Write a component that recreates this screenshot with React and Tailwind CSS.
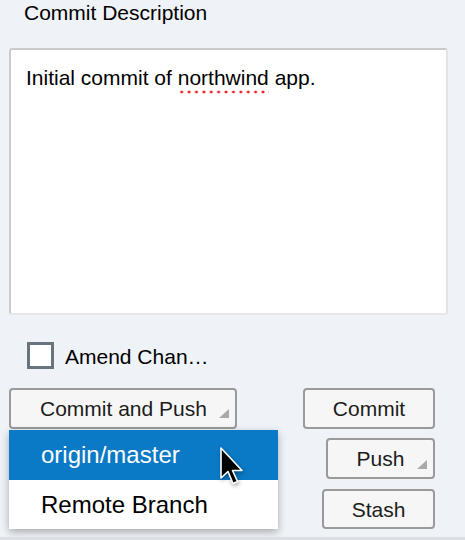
import React from "react";

const Corner = () => (
  <svg width="10" height="9" viewBox="0 0 10 9" className="absolute">
    <polygon points="10,0 10,9 0,9" fill="#a9a9a9" />
  </svg>
);

const Cursor = () => (
  <svg
    width="28"
    height="42"
    viewBox="-2 -2 28 42"
    className="absolute z-20 left-[219px] top-[446px] drop-shadow-[1px_2px_2px_rgba(0,0,0,0.35)]"
  >
    <path
      d="M0 0 L0 30 L7 23.5 L12 35.5 L16.5 33.5 L11.5 22.5 L21 22.5 Z"
      fill="#000"
      stroke="#fff"
      strokeWidth="1.6"
      strokeLinejoin="round"
    />
  </svg>
);

const App = () => {
  return (
    <div className="relative w-[465px] h-[540px] overflow-hidden bg-[#eff2f7] border-b-[3px] border-[#dcdfe5] font-['Liberation_Sans',Arial,sans-serif] text-black">
      <div className="pl-[24px] pt-[1px] text-[21px] leading-[24px]">Commit Description</div>

      <div className="mt-[23px] ml-[9px] w-[439px] h-[267px] bg-white rounded-[3px] border-2 border-[#cbcbcb] border-r-[#e3e3e3] border-b-[#e6e6e6] pl-[15px] pt-[16px] text-[21px] leading-[24px]">
        Initial commit of{" "}
        <span className="relative">
          northwind
          <span className="absolute left-0 right-0 top-[24px] h-[4px] bg-[radial-gradient(circle,#f21c1c_1.2px,transparent_1.7px)] bg-[length:7.4px_4px] bg-repeat-x" />
        </span>{" "}
        app.
      </div>

      <div className="mt-[27px] ml-[27px] flex items-center">
        <div className="w-[27px] h-[27px] bg-white border-[3px] border-[#68747e]" />
        <span className="ml-[11px] mt-[2px] text-[21px] leading-[24px]">Amend Chan…</span>
      </div>

      <div className="mt-[19px] flex">
        <div className="relative ml-[9px]">
          <button className="relative w-[228px] h-[41px] flex items-center pl-[29px] pt-[1px] bg-[#f6f6f6] border-2 border-[#9a9a9a] rounded-[4px] text-[21px] leading-[24px] text-[#1c1c1c]">
            Commit and Push
            <span className="absolute right-[6px] bottom-[9px] w-[10px] h-[9px]">
              <Corner />
            </span>
          </button>
          <div className="absolute left-0 top-[42px] w-[269px] bg-white shadow-[0_3px_8px_rgba(0,0,0,0.3)] z-10 text-[24px] leading-[28px]">
            <div className="h-[50px] flex items-center pl-[32px] bg-[#0a79c6] text-white">origin/master</div>
            <div className="h-[49px] flex items-center pl-[32px] text-black">Remote Branch</div>
          </div>
        </div>

        <div className="ml-auto mr-[30px] flex flex-col items-end gap-[9px] text-[21px] leading-[24px] text-[#1c1c1c]">
          <button className="w-[132px] h-[41px] flex items-center justify-center pt-[1px] bg-[#f6f6f6] border-2 border-[#9a9a9a] rounded-[4px]">
            Commit
          </button>
          <button className="relative w-[109px] h-[41px] flex items-center justify-center pt-[1px] bg-[#f6f6f6] border-2 border-[#9a9a9a] rounded-[4px]">
            Push
            <span className="absolute right-[6px] bottom-[8px] w-[10px] h-[9px]">
              <Corner />
            </span>
          </button>
          <button className="mt-[1px] w-[113px] h-[40px] flex items-center justify-center pt-[1px] bg-[#f6f6f6] border-2 border-[#9a9a9a] rounded-[4px]">
            Stash
          </button>
        </div>
      </div>

      <Cursor />
    </div>
  );
};

export default App;
